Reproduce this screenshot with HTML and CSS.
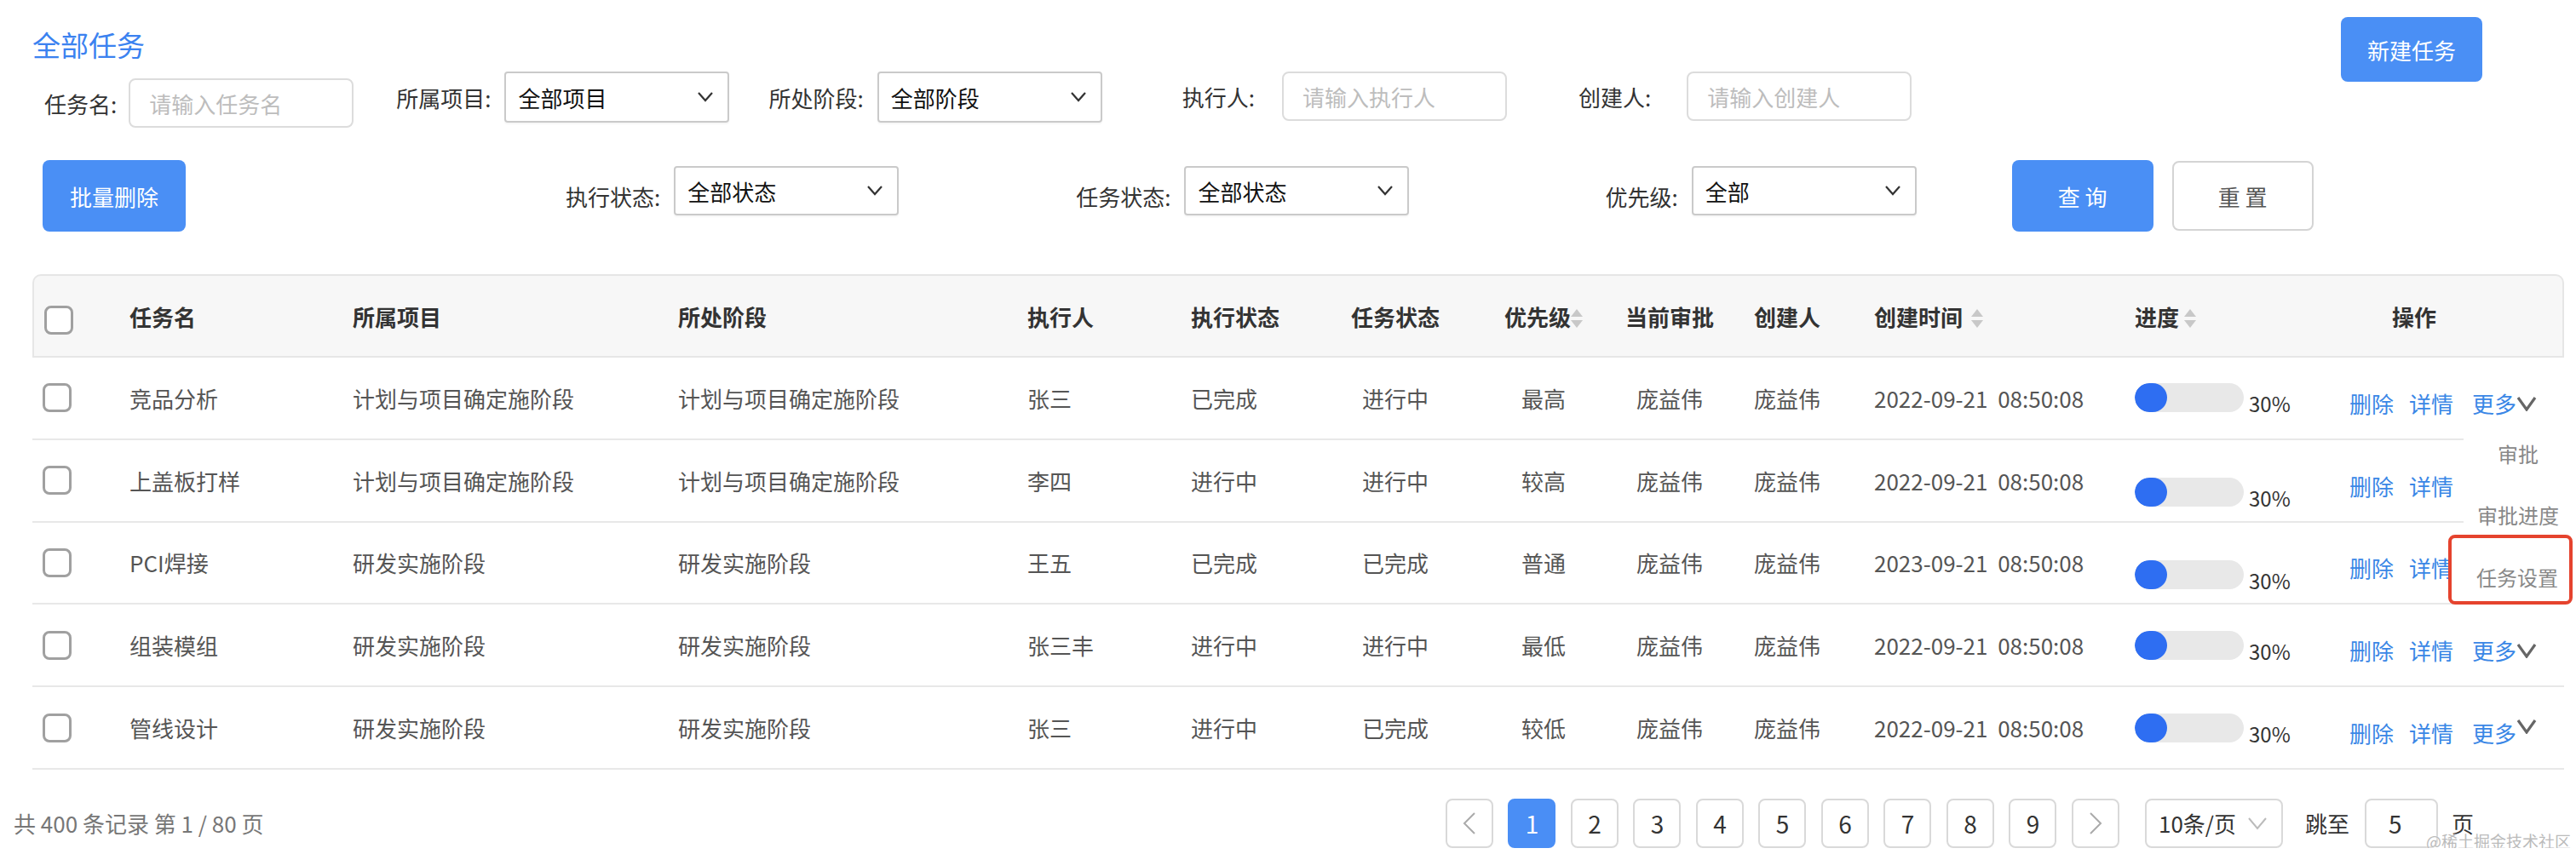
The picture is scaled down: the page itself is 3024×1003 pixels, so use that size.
FILE: index.html
```html
<!DOCTYPE html>
<html lang="zh-CN">
<head>
    <meta charset="UTF-8">
    <title>全部任务</title>
    <link rel="stylesheet" href="styles.css">
</head>
<body>
<div class="page">
    <div class="topbar">
        <h1 class="title">全部任务</h1>
        <button class="btn btn-primary btn-new">新建任务</button>
    </div>

    <!-- 筛选条件 -->
    <div class="filter-row row-1">
        <div class="field f-name">
            <label>任务名:</label>
            <input class="input" placeholder="请输入任务名">
        </div>
        <div class="field f-project">
            <label>所属项目:</label>
            <div class="select"><span>全部项目</span><svg width="10" height="6" viewBox="0 0 10 6"><polyline points="1,0.5 5,5 9,0.5" fill="none" stroke="#333" stroke-width="1.1"/></svg></div>
        </div>
        <div class="field f-stage">
            <label>所处阶段:</label>
            <div class="select"><span>全部阶段</span><svg width="10" height="6" viewBox="0 0 10 6"><polyline points="1,0.5 5,5 9,0.5" fill="none" stroke="#333" stroke-width="1.1"/></svg></div>
        </div>
        <div class="field f-executor">
            <label>执行人:</label>
            <input class="input" placeholder="请输入执行人">
        </div>
        <div class="field f-creator">
            <label>创建人:</label>
            <input class="input" placeholder="请输入创建人">
        </div>
    </div>

    <div class="filter-row row-2">
        <button class="btn btn-primary btn-batch">批量删除</button>
        <div class="field f-exec-status">
            <label>执行状态:</label>
            <div class="select"><span>全部状态</span><svg width="10" height="6" viewBox="0 0 10 6"><polyline points="1,0.5 5,5 9,0.5" fill="none" stroke="#333" stroke-width="1.1"/></svg></div>
        </div>
        <div class="field f-task-status">
            <label>任务状态:</label>
            <div class="select"><span>全部状态</span><svg width="10" height="6" viewBox="0 0 10 6"><polyline points="1,0.5 5,5 9,0.5" fill="none" stroke="#333" stroke-width="1.1"/></svg></div>
        </div>
        <div class="field f-priority">
            <label>优先级:</label>
            <div class="select"><span>全部</span><svg width="10" height="6" viewBox="0 0 10 6"><polyline points="1,0.5 5,5 9,0.5" fill="none" stroke="#333" stroke-width="1.1"/></svg></div>
        </div>
        <button class="btn btn-primary btn-query">查 询</button>
        <button class="btn btn-default btn-reset">重 置</button>
    </div>

    <!-- 任务列表 -->
    <div class="table-wrap">
        <table class="task-table">
            <colgroup>
                <col style="width:57px"><col style="width:131px"><col style="width:191px"><col style="width:205px">
                <col style="width:87px"><col style="width:80px"><col style="width:98px"><col style="width:76px">
                <col style="width:72px"><col style="width:66px"><col style="width:158px"><col style="width:130px">
                <col style="width:135px">
            </colgroup>
            <thead>
                <tr>
                    <th class="c-check"><span class="checkbox"></span></th>
                    <th>任务名</th>
                    <th>所属项目</th>
                    <th>所处阶段</th>
                    <th>执行人</th>
                    <th class="c-exec">执行状态</th>
                    <th class="c-center">任务状态</th>
                    <th class="c-center">优先级<svg class="sort" width="7" height="11" viewBox="0 0 7 11"><polygon points="0,4.5 3.5,0 7,4.5" fill="#c8c8c8"/><polygon points="0,6.5 7,6.5 3.5,11" fill="#c8c8c8"/></svg></th>
                    <th class="c-center">当前审批</th>
                    <th class="c-center">创建人</th>
                    <th class="c-time">创建时间 <svg class="sort sort-gap" width="7" height="11" viewBox="0 0 7 11"><polygon points="0,4.5 3.5,0 7,4.5" fill="#c8c8c8"/><polygon points="0,6.5 7,6.5 3.5,11" fill="#c8c8c8"/></svg></th>
                    <th class="c-progress">进度<svg class="sort sort-small" width="7" height="11" viewBox="0 0 7 11"><polygon points="0,4.5 3.5,0 7,4.5" fill="#c8c8c8"/><polygon points="0,6.5 7,6.5 3.5,11" fill="#c8c8c8"/></svg></th>
                    <th class="c-actions">操作</th>
                </tr>
            </thead>
            <tbody>
                <tr>
                    <td class="c-check"><span class="checkbox"></span></td>
                    <td>竞品分析</td>
                    <td>计划与项目确定施阶段</td>
                    <td>计划与项目确定施阶段</td>
                    <td>张三</td>
                    <td class="c-exec">已完成</td>
                    <td class="c-center">进行中</td>
                    <td class="c-center">最高</td>
                    <td class="c-center">庞益伟</td>
                    <td class="c-center">庞益伟</td>
                    <td class="c-time">2022-09-21&nbsp; 08:50:08</td>
                    <td class="c-progress"><div class="progress"><div class="bar"><div class="fill" style="width:30%"></div></div><span class="pct">30%</span></div></td>
                    <td class="c-actions"><div class="ops"><a>删除</a><a>详情</a><a class="more">更多<svg width="12" height="9" viewBox="0 0 12 9"><polyline points="1,1 6,8 11,1" fill="none" stroke="#666" stroke-width="1.6"/></svg></a></div></td>
                </tr>
                <tr>
                    <td class="c-check"><span class="checkbox"></span></td>
                    <td>上盖板打样</td>
                    <td>计划与项目确定施阶段</td>
                    <td>计划与项目确定施阶段</td>
                    <td>李四</td>
                    <td class="c-exec">进行中</td>
                    <td class="c-center">进行中</td>
                    <td class="c-center">较高</td>
                    <td class="c-center">庞益伟</td>
                    <td class="c-center">庞益伟</td>
                    <td class="c-time">2022-09-21&nbsp; 08:50:08</td>
                    <td class="c-progress"><div class="progress low"><div class="bar"><div class="fill" style="width:30%"></div></div><span class="pct">30%</span></div></td>
                    <td class="c-actions"><div class="ops"><a>删除</a><a>详情</a></div></td>
                </tr>
                <tr>
                    <td class="c-check"><span class="checkbox"></span></td>
                    <td>PCI焊接</td>
                    <td>研发实施阶段</td>
                    <td>研发实施阶段</td>
                    <td>王五</td>
                    <td class="c-exec">已完成</td>
                    <td class="c-center">已完成</td>
                    <td class="c-center">普通</td>
                    <td class="c-center">庞益伟</td>
                    <td class="c-center">庞益伟</td>
                    <td class="c-time">2023-09-21&nbsp; 08:50:08</td>
                    <td class="c-progress"><div class="progress low"><div class="bar"><div class="fill" style="width:30%"></div></div><span class="pct">30%</span></div></td>
                    <td class="c-actions"><div class="ops"><a>删除</a><a>详情</a></div></td>
                </tr>
                <tr>
                    <td class="c-check"><span class="checkbox"></span></td>
                    <td>组装模组</td>
                    <td>研发实施阶段</td>
                    <td>研发实施阶段</td>
                    <td>张三丰</td>
                    <td class="c-exec">进行中</td>
                    <td class="c-center">进行中</td>
                    <td class="c-center">最低</td>
                    <td class="c-center">庞益伟</td>
                    <td class="c-center">庞益伟</td>
                    <td class="c-time">2022-09-21&nbsp; 08:50:08</td>
                    <td class="c-progress"><div class="progress"><div class="bar"><div class="fill" style="width:30%"></div></div><span class="pct">30%</span></div></td>
                    <td class="c-actions"><div class="ops"><a>删除</a><a>详情</a><a class="more">更多<svg width="12" height="9" viewBox="0 0 12 9"><polyline points="1,1 6,8 11,1" fill="none" stroke="#666" stroke-width="1.6"/></svg></a></div></td>
                </tr>
                <tr>
                    <td class="c-check"><span class="checkbox"></span></td>
                    <td>管线设计</td>
                    <td>研发实施阶段</td>
                    <td>研发实施阶段</td>
                    <td>张三</td>
                    <td class="c-exec">进行中</td>
                    <td class="c-center">已完成</td>
                    <td class="c-center">较低</td>
                    <td class="c-center">庞益伟</td>
                    <td class="c-center">庞益伟</td>
                    <td class="c-time">2022-09-21&nbsp; 08:50:08</td>
                    <td class="c-progress"><div class="progress"><div class="bar"><div class="fill" style="width:30%"></div></div><span class="pct">30%</span></div></td>
                    <td class="c-actions"><div class="ops"><a>删除</a><a>详情</a><a class="more">更多<svg class="up" width="12" height="9" viewBox="0 0 12 9"><polyline points="1,1 6,8 11,1" fill="none" stroke="#666" stroke-width="1.6"/></svg></a></div></td>
                </tr>
            </tbody>
        </table>

        <!-- 更多 下拉菜单 -->
        <div class="more-menu">
            <div class="menu-item">审批</div>
            <div class="menu-item">审批进度</div>
            <div class="menu-item marked">任务设置</div>
        </div>
    </div>

    <div class="footer">
        <div class="total">共 400 条记录 第 1 / 80 页</div>
        <div class="pager">
            <div class="pages">
                <span class="page-btn"><svg width="8" height="14" viewBox="0 0 8 14"><polyline points="7,1 1,7 7,13" fill="none" stroke="#aaa" stroke-width="1"/></svg></span>
                <span class="page-btn active">1</span>
                <span class="page-btn">2</span>
                <span class="page-btn">3</span>
                <span class="page-btn">4</span>
                <span class="page-btn">5</span>
                <span class="page-btn">6</span>
                <span class="page-btn">7</span>
                <span class="page-btn">8</span>
                <span class="page-btn">9</span>
                <span class="page-btn"><svg width="8" height="14" viewBox="0 0 8 14"><polyline points="1,1 7,7 1,13" fill="none" stroke="#aaa" stroke-width="1"/></svg></span>
            </div>
            <div class="size-select"><span>10条/页</span><svg width="12" height="8" viewBox="0 0 12 8"><polyline points="1,1 6,7 11,1" fill="none" stroke="#bbb" stroke-width="1"/></svg></div>
            <span class="jump-label">跳至</span>
            <div class="jump-input">5</div>
            <span class="page-unit">页</span>
        </div>
        <div class="watermark">@稀土掘金技术社区</div>
    </div>
</div>
</body>
</html>
```

FILE: styles.css
```css
body {
    margin: 0;
    zoom: 2;
    font-family: "Noto Sans CJK SC", "Noto Sans", sans-serif;
    font-size: 13px;
    color: #333;
    background: #fff;
}
.page {
    width: 1512px;
}

/* top bar */
.topbar {
    display: flex;
    justify-content: space-between;
    align-items: flex-start;
    height: 42px;
    padding: 0 55px 0 19px;
}
.title {
    margin: 15px 0 0;
    font-size: 16.5px;
    line-height: 22px;
    font-weight: 400;
    color: #3b82f0;
}
.btn {
    font-family: inherit;
    font-size: 13px;
    border-radius: 4px;
    cursor: pointer;
    padding: 0;
}
.btn-primary {
    background: #4a8ff5;
    color: #fff;
    border: none;
}
.btn-default {
    background: #fff;
    color: #555;
    border: 1px solid #d4d4d4;
}
.btn-new {
    margin-top: 10px;
    width: 83px;
    height: 38px;
    flex-shrink: 0;
}

/* filters */
.filter-row {
    display: flex;
    padding-left: 26px;
}
.row-1 {
    align-items: flex-start;
    height: 34px;
}
.row-2 {
    align-items: center;
    height: 44px;
    margin-top: 17px;
    padding-left: 25px;
}
.field {
    display: flex;
    align-items: center;
    white-space: nowrap;
}
.field label {
    color: #333;
}
.f-name { margin-top: 4px; }
.f-name .input { margin-left: 7px; }
.f-project { margin-left: 25px; }
.f-stage { margin-left: 23px; }
.f-project .select, .f-stage .select { margin-left: 8px; }
.f-executor { margin-left: 47px; }
.f-executor .input { margin-left: 16px; }
.f-creator { margin-left: 42px; }
.f-creator .input { margin-left: 21px; }

.f-exec-status { margin-left: 223px; }
.f-task-status { margin-left: 104px; }
.f-priority { margin-left: 115px; }
.row-2 .select { margin-left: 8px; margin-bottom: 6px; height: 29px; }

.input {
    box-sizing: border-box;
    width: 132px;
    height: 29px;
    border: 1px solid #dcdcdc;
    border-radius: 4px;
    padding: 0 11px;
    font-family: inherit;
    font-size: 13px;
    outline: none;
}
.input::placeholder {
    color: #bdbdbd;
}
.select {
    box-sizing: border-box;
    display: flex;
    align-items: center;
    justify-content: space-between;
    width: 132px;
    height: 30px;
    border: 1px solid #cacaca;
    border-radius: 2px;
    padding: 0 8px 0 7px;
    color: #111;
    box-shadow: 0 1px 1px rgba(0, 0, 0, 0.04);
}
.btn-batch {
    width: 84px;
    height: 42px;
}
.btn-query {
    width: 83px;
    height: 42px;
    margin-left: 56px;
}
.btn-reset {
    width: 83px;
    height: 41px;
    margin-left: 11px;
}

/* table */
.table-wrap {
    position: relative;
    width: 1486px;
    margin: 24px 0 0 19px;
}
.task-table {
    width: 1486px;
    table-layout: fixed;
    border-collapse: separate;
    border-spacing: 0;
}
.task-table th {
    height: 47px;
    padding: 0;
    text-align: left;
    font-weight: 700;
    color: #333;
    background: #f7f7f7;
    border-top: 1px solid #e6e6e6;
    border-bottom: 1px solid #e6e6e6;
    white-space: nowrap;
}
.task-table th:first-child {
    border-left: 1px solid #e6e6e6;
    border-top-left-radius: 5px;
}
.task-table th:last-child {
    border-right: 1px solid #e6e6e6;
    border-top-right-radius: 5px;
}
.task-table td {
    height: 47.4px;
    padding: 0;
    color: #555;
    border-bottom: 1px solid #e8e8e8;
    white-space: nowrap;
}
.task-table .c-check { padding-left: 6px; }
th.c-check .checkbox { margin-top: 5px; }
.checkbox {
    display: block;
    box-sizing: border-box;
    width: 17px;
    height: 17px;
    border: 1.5px solid #a0a0a0;
    border-radius: 4px;
    background: #fff;
}
.task-table .c-exec { padding-left: 9px; }
.task-table .c-center { text-align: center; }
.task-table .c-time { padding-left: 18px; }
.task-table .c-progress { padding-left: 13px; }
.task-table th.c-actions { padding-left: 34px; }
.task-table td.c-actions { padding-left: 9px; }

.sort {
    vertical-align: -1px;
}
.sort-gap { margin-left: 2px; }
.sort-small { margin-left: 3px; }

.progress {
    display: flex;
    align-items: flex-end;
}
.progress.low {
    margin-top: 14px;
}
.bar {
    width: 64px;
    height: 17px;
    border-radius: 9px;
    background: #e8e8e8;
    overflow: hidden;
}
.fill {
    height: 100%;
    border-radius: 9px;
    background: #2e6ef2;
}
.pct {
    margin-left: 3px;
    font-size: 12px;
    line-height: 12px;
    color: #333;
    margin-bottom: -1px;
}
.ops {
    padding-top: 6px;
}
.ops a {
    color: #3a87e6;
    margin-right: 9px;
    cursor: pointer;
}
.ops a.more {
    margin-left: 2px;
    margin-right: 0;
}
.ops .more svg {
    vertical-align: 1px;
}
.ops .more svg.up {
    vertical-align: 5px;
}

/* dropdown of 更多 */
.more-menu {
    position: absolute;
    left: 1427px;
    top: 87px;
    width: 64px;
    background: #fff;
    z-index: 2;
}
.menu-item {
    height: 36px;
    display: flex;
    align-items: center;
    justify-content: center;
    font-size: 12px;
    color: #888;
}
.menu-item.marked {
    box-sizing: border-box;
    width: 73px;
    height: 41px;
    margin: -6px 0 0 -9px;
    padding: 8px 0 0 8px;
    border: 2px solid #e5432e;
    border-radius: 4px;
    background: #fff;
}

/* footer / pagination */
.footer {
    position: relative;
    display: flex;
    justify-content: space-between;
    align-items: center;
    height: 29px;
    margin-top: 17px;
    padding: 0 60px 0 8px;
}
.total {
    color: #777;
}
.pager {
    display: flex;
    align-items: center;
}
.pages {
    display: flex;
    gap: 8.75px;
}
.page-btn {
    box-sizing: border-box;
    display: flex;
    align-items: center;
    justify-content: center;
    width: 28px;
    height: 29px;
    border: 1px solid #d9d9d9;
    border-radius: 4px;
    font-size: 14px;
    color: #333;
}
.page-btn.active {
    background: #4a8ef5;
    border-color: #4a8ef5;
    color: #fff;
}
.size-select {
    box-sizing: border-box;
    display: flex;
    align-items: center;
    justify-content: space-between;
    width: 81px;
    height: 29px;
    margin-left: 15px;
    padding: 0 8px 0 7px;
    border: 1px solid #d9d9d9;
    border-radius: 4px;
    font-size: 13px;
    color: #333;
}
.jump-label {
    margin-left: 13px;
    color: #333;
}
.jump-input {
    box-sizing: border-box;
    width: 43px;
    height: 29px;
    margin-left: 9px;
    padding-left: 13px;
    border: 1px solid #d9d9d9;
    border-radius: 4px;
    line-height: 27px;
    font-size: 14px;
}
.page-unit {
    margin-left: 8px;
}
.watermark {
    position: absolute;
    right: 3px;
    top: 18px;
    font-size: 9.5px;
    color: #bbb;
    text-shadow: 0 0 1px #fff;
}
```
